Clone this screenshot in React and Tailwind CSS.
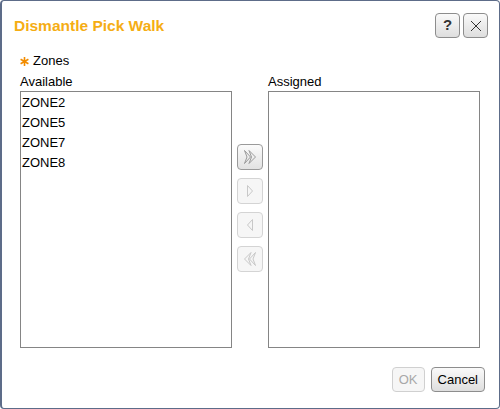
import React from "react";

const zones = ["ZONE2", "ZONE5", "ZONE7", "ZONE8"];

// small outlined arrow glyphs used on the move buttons
const Arrow = ({ dir, double, color }) => {
    const flip = dir === "left" ? "scale(-1,1) translate(-16,0)" : "";
    return (
        <svg width="16" height="16" viewBox="0 0 16 16" fill="none">
            <g transform={flip} stroke={color} strokeWidth="1" strokeLinejoin="miter">
                {double ? (
                    <>
                        <path d="M2.5 1.5 L8.5 8 L2.5 14.5 L5 8 Z" />
                        <path d="M7 1.5 L13.5 8 L7 14.5 L9.5 8 Z" />
                    </>
                ) : (
                    <path d="M5.5 2.5 L10.5 8 L5.5 13.5 Z" />
                )}
            </g>
        </svg>
    );
};

const MoveButton = ({ enabled, children }) => (
    <button
        className={
            enabled
                ? "w-[26px] h-[26px] flex items-center justify-center rounded-[4px] border border-[#9a9a9a] bg-gradient-to-b from-[#fbfbfb] to-[#e2e2e2]"
                : "w-[26px] h-[26px] flex items-center justify-center rounded-[4px] border border-[#d4d4d4] bg-[#f6f6f6]"
        }
    >
        {children}
    </button>
);

const App = () => {
    return (
        <div
            className="w-[500px] h-[409px] bg-white border border-l-2 border-[#5d6c89] rounded-[4px] flex flex-col text-[13px] text-black"
            style={{ fontFamily: '"Liberation Sans", Arial, sans-serif' }}
        >
            {/* Header */}
            <div className="flex items-start justify-between pl-[12px] pr-[11px] pt-[12px]">
                <h1 className="text-[15.5px] leading-[22px] font-bold text-[#f5ad14] mt-[2px]">Dismantle Pick Walk</h1>
                <div className="flex gap-[3px]">
                    <button className="w-[25px] h-[25px] rounded-[4px] border border-[#8d8d8d] bg-gradient-to-b from-[#fafafa] to-[#dedede] text-[15px] font-bold text-[#333] flex items-center justify-center">
                        ?
                    </button>
                    <button className="w-[25px] h-[25px] rounded-[4px] border border-[#8d8d8d] bg-gradient-to-b from-[#fafafa] to-[#dedede] flex items-center justify-center">
                        <svg width="12" height="12" viewBox="0 0 12 12" stroke="#333" strokeWidth="1">
                            <path d="M1 1 L11 11 M11 1 L1 11" />
                        </svg>
                    </button>
                </div>
            </div>

            {/* Body */}
            <div className="pl-[18px] pr-[18px] mt-[15px]">
                <div className="flex items-center gap-[4px] h-[16px]">
                    <svg width="9" height="9" viewBox="0 0 9 9" stroke="#f28c00" strokeWidth="1.6">
                        <path d="M4.5 0 L4.5 9 M0.6 2.25 L8.4 6.75 M0.6 6.75 L8.4 2.25" />
                    </svg>
                    <span>Zones</span>
                </div>
                <div className="flex mt-[5px]">
                    <div className="flex flex-col">
                        <span className="h-[17px] leading-[15px]">Available</span>
                        <div className="w-[212px] h-[257px] border border-[#858585] pt-[1px] pl-[1px]">
                            {zones.map((z) => (
                                <div key={z} className="h-[20px] leading-[20px]">{z}</div>
                            ))}
                        </div>
                    </div>
                    <div className="w-[36px] flex flex-col items-center gap-[8px] pt-[70px]">
                        <MoveButton enabled><Arrow dir="right" double color="#9a9a9a" /></MoveButton>
                        <MoveButton><Arrow dir="right" color="#c8c8c8" /></MoveButton>
                        <MoveButton><Arrow dir="left" color="#c8c8c8" /></MoveButton>
                        <MoveButton><Arrow dir="left" double color="#c8c8c8" /></MoveButton>
                    </div>
                    <div className="flex flex-col">
                        <span className="h-[17px] leading-[15px]">Assigned</span>
                        <div className="w-[212px] h-[257px] border border-[#858585]"></div>
                    </div>
                </div>
            </div>

            {/* Footer */}
            <div className="flex justify-end gap-[6px] pr-[14px] mt-[19px]">
                <button className="h-[25px] px-[6px] rounded-[4px] border border-[#d0d0d0] bg-[#f6f6f6] text-[#a8a8a8]">OK</button>
                <button className="h-[25px] px-[6px] rounded-[4px] border border-[#8d8d8d] bg-gradient-to-b from-[#fafafa] to-[#dedede]">Cancel</button>
            </div>
        </div>
    );
};

export default App;
